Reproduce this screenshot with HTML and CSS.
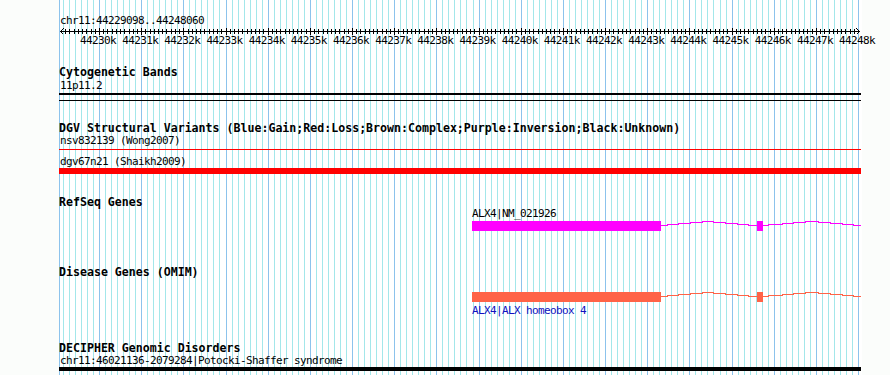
FILE: index.html
```html
<!DOCTYPE html>
<html lang="en">

<head>
    <meta charset="UTF-8">
    <meta name="viewport" content="width=device-width, initial-scale=1.0">
    <title>chr11:44229098..44248060</title>
    <link rel="stylesheet" href="styles.css">
</head>

<body>
    <div class="browser">
        <!-- grid lines behind every track -->
        <svg class="grid" id="grid" width="803" height="375"></svg>

        <div class="locus">chr11:44229098..44248060</div>
        <svg class="ruler" id="ruler" width="803" height="22"></svg>

        <section class="track cyto">
            <div class="track-title">Cytogenetic Bands</div>
            <div class="item">11p11.2</div>
            <div class="ideogram"></div>
        </section>

        <section class="track dgv">
            <div class="track-title">DGV Structural Variants (Blue:Gain;Red:Loss;Brown:Complex;Purple:Inversion;Black:Unknown)</div>
            <div class="item">nsv832139 (Wong2007)</div>
            <div class="loss-line"></div>
            <div class="item second">dgv67n21 (Shaikh2009)</div>
            <div class="loss-bar"></div>
        </section>

        <section class="track refseq">
            <div class="track-title">RefSeq Genes</div>
            <div class="feature">
                <svg class="gene refseq-gene" width="803" height="26">
                    <rect x="413" y="13" width="189" height="10"></rect>
                    <rect x="698" y="13" width="6" height="10"></rect>
                    <path d="M602 17.5 H608 V16.5 H619 V15.5 H631 V14.5 H643 V13.5 H654 V14.5 H666 V15.5 H678 V16.5 H689 V17.5 H698 M704 17.5 H709 V16.5 H723 V15.5 H734 V14.5 H746 V13.5 H759 V14.5 H771 V15.5 H783 V16.5 H794 V17.5 H802"></path>
                </svg>
                <span class="feature-label">ALX4|NM_021926</span>
            </div>
        </section>

        <section class="track omim">
            <div class="track-title">Disease Genes (OMIM)</div>
            <div class="feature tall">
                <svg class="gene omim-gene" width="803" height="26">
                    <rect x="413" y="13" width="189" height="10"></rect>
                    <rect x="698" y="13" width="6" height="10"></rect>
                    <path d="M602 17.5 H608 V16.5 H619 V15.5 H631 V14.5 H643 V13.5 H654 V14.5 H666 V15.5 H678 V16.5 H689 V17.5 H698 M704 17.5 H709 V16.5 H723 V15.5 H734 V14.5 H746 V13.5 H759 V14.5 H771 V15.5 H783 V16.5 H794 V17.5 H802"></path>
                </svg>
                <span class="feature-label below">ALX4|ALX homeobox 4</span>
            </div>
        </section>

        <section class="track decipher">
            <div class="track-title">DECIPHER Genomic Disorders</div>
            <div class="item">chr11:46021136-2079284|Potocki-Shaffer syndrome</div>
            <div class="disorder-bar"></div>
        </section>
    </div>

    <script src="script.js"></script>
</body>

</html>
```

FILE: styles.css
```css
/* styles.css */
body {
    margin: 0;
    background-color: #fbfdfb;
    font-family: "DejaVu Sans Mono", "Liberation Mono", monospace;
    color: #000;
    overflow: hidden;
}

.browser {
    position: relative;
    width: 803px;
    height: 375px;
    margin-left: 59px;
    background: #fff;
    display: flex;
    flex-direction: column;
}

.grid {
    position: absolute;
    top: 0;
    left: 0;
    z-index: 0;
}

.grid line {
    stroke-width: 1;
    shape-rendering: crispEdges;
}

.grid .minor {
    stroke: #a3e7ea;
}

.grid .major {
    stroke: #8cc3ec;
}

.locus,
.ruler,
.track {
    position: relative;
    z-index: 1;
}

/* small text: 6px per character like the server font */
.locus,
.item,
.feature-label {
    font-size: 11px;
    letter-spacing: -0.62px;
    line-height: 10px;
    white-space: nowrap;
}

.locus {
    margin-top: 16px;
    padding-left: 1px;
    height: 10px;
}

.ruler {
    display: block;
    overflow: visible;
}

.ruler line,
.ruler path {
    stroke: #000;
    stroke-width: 1;
    fill: none;
    shape-rendering: crispEdges;
}

.ruler text {
    font-family: "DejaVu Sans Mono", "Liberation Mono", monospace;
    font-size: 11px;
    letter-spacing: -0.62px;
    fill: #000;
}

.track {
    display: flex;
    flex-direction: column;
}

.track-title {
    font-size: 11.6px;
    font-weight: bold;
    line-height: 12px;
    height: 12px;
    white-space: nowrap;
}

.item {
    padding-left: 1px;
    height: 10px;
}

/* Cytogenetic Bands */
.cyto {
    margin-top: 18px;
}

.cyto .item {
    margin-top: 3px;
}

.ideogram {
    margin-top: 2px;
    margin-right: 1px;
    height: 5px;
    border-top: 2px solid #000;
    border-bottom: 1px solid #000;
}

/* DGV */
.dgv {
    margin-top: 21px;
}

.dgv .item {
    margin-top: 2px;
}

.dgv .item.second {
    margin-top: 7px;
}

.loss-line {
    margin-top: 3px;
    margin-right: 1px;
    height: 1px;
    background: #ff0000;
}

.loss-bar {
    margin-top: 1px;
    margin-right: 1px;
    height: 6px;
    background: #ff0000;
}

/* gene tracks */
.refseq {
    margin-top: 22px;
}

.omim {
    margin-top: 32px;
}

.feature {
    position: relative;
    height: 26px;
}

.feature.tall {
    margin-top: 1px;
    height: 39px;
}

.gene {
    position: absolute;
    top: 0;
    left: 0;
}

.gene rect {
    shape-rendering: crispEdges;
}

.gene path {
    fill: none;
    stroke-width: 1;
    shape-rendering: crispEdges;
}

.refseq-gene rect {
    fill: #ff00ff;
}

.refseq-gene path {
    stroke: #ff00ff;
}

.omim-gene rect {
    fill: #ff6347;
}

.omim-gene path {
    stroke: #ff6347;
}

.feature-label {
    position: absolute;
    left: 413px;
    top: 1px;
}

.feature-label.below {
    top: 27px;
    color: #1010c0;
}

/* DECIPHER */
.decipher {
    margin-top: 24px;
}

.decipher .item {
    margin-top: 2px;
}

.disorder-bar {
    margin-top: 1px;
    margin-right: 1px;
    height: 4px;
    background: #000;
}
```

FILE: script.js
```js
const NS = 'http://www.w3.org/2000/svg';

function addLine(svg, x1, y1, x2, y2, cls) {
    const l = document.createElementNS(NS, 'line');
    l.setAttribute('x1', x1);
    l.setAttribute('y1', y1);
    l.setAttribute('x2', x2);
    l.setAttribute('y2', y2);
    if (cls) l.setAttribute('class', cls);
    svg.appendChild(l);
}

// 44230k sits at x=40, one kb is 42.17px
const start = 40;
const kb = 42.17;

// grid: seven lines per kb, every seventh one darker
const grid = document.getElementById('grid');
addLine(grid, 0.5, 0, 0.5, 375, 'major');
for (let j = -6; j <= 126; j++) {
    const x = Math.round(start + j * kb / 7) + 0.5;
    if (x < 3 || x > 802) continue;
    addLine(grid, x, 0, x, 375, j % 7 === 0 ? 'major' : 'minor');
}

// ruler: axis, arrows, ticks every 100bp, labels every kb
const ruler = document.getElementById('ruler');
addLine(ruler, 1, 5.5, 801, 5.5);
addLine(ruler, 1.5, 5.5, 4.5, 2.5);
addLine(ruler, 1.5, 5.5, 4.5, 8.5);
addLine(ruler, 800.5, 5.5, 797.5, 2.5);
addLine(ruler, 800.5, 5.5, 797.5, 8.5);

for (let i = -9; i <= 180; i++) {
    const x = Math.round(start + i * kb / 10) + 0.5;
    if (x < 4 || x > 798) continue;
    if (i % 10 === 0) {
        addLine(ruler, x, 2, x, 9);
    } else {
        addLine(ruler, x, 3, x, 8);
    }
}

for (let k = 0; k <= 18; k++) {
    const t = document.createElementNS(NS, 'text');
    t.setAttribute('x', start + k * kb - 1);
    t.setAttribute('y', 18);
    t.setAttribute('text-anchor', 'middle');
    t.textContent = (44230 + k) + 'k';
    ruler.appendChild(t);
}
```
